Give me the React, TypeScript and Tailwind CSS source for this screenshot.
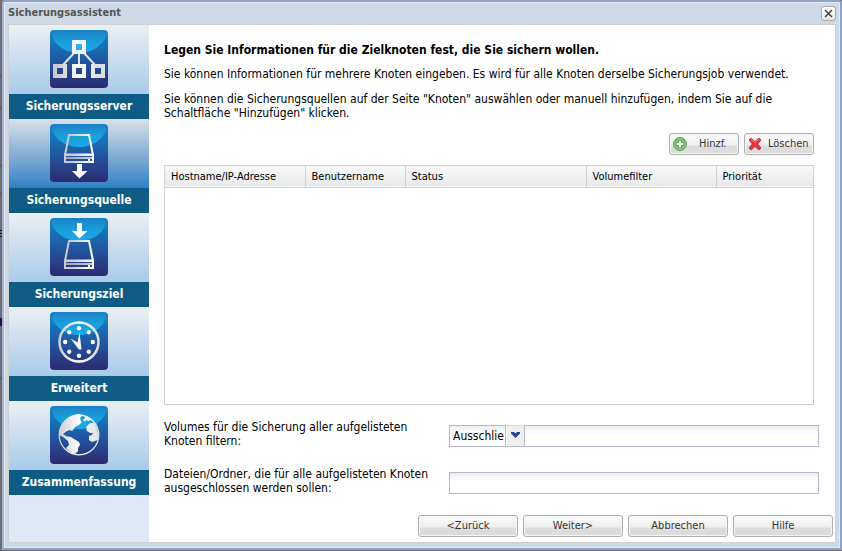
import { useId, type ReactNode } from "react";
import { clsx } from "clsx";

interface Step {
  label: string;
  glyph: (fill: string) => ReactNode;
  active?: boolean;
}

const drive = (fill: string) => (
  <>
    <path d="M5 1h20l4 20H1z" fill="none" stroke={fill} strokeWidth="2" />
    <path d="M1 20.500h28v7.500H1z" fill="none" stroke={fill} strokeWidth="2" />
    <path d="M1 24h28" stroke={fill} strokeWidth="1.500" />
    <rect x="24" y="25" width="2" height="2" fill={fill} />
  </>
);

const STEPS: Step[] = [
  {
    label: "Sicherungsserver",
    glyph: (fill) => (
      <>
        <path d="M25 22 12 36M29 22v14M33 22l13 14" stroke="#dfe4ee" strokeWidth="2" />
        <g fill="none" stroke={fill} strokeWidth="4">
          <rect x="24" y="12" width="10" height="10" />
          <rect x="5" y="36" width="10" height="10" />
          <rect x="24" y="36" width="10" height="10" />
          <rect x="43" y="36" width="10" height="10" />
        </g>
        <rect x="26" y="14" width="6" height="6" fill="#27b0f5" />
      </>
    ),
  },
  {
    label: "Sicherungsquelle",
    active: true,
    glyph: (fill) => (
      <>
        <g transform="translate(14 10)">{drive(fill)}</g>
        <path d="M27 40h5v7h5.500L29.500 54.500 22 47h5z" fill="#fff" />
      </>
    ),
  },
  {
    label: "Sicherungsziel",
    glyph: (fill) => (
      <>
        <path d="M27 5h5v8h5.500L29.500 20.500 22 13h5z" fill="#fff" />
        <g transform="translate(14 22)">{drive(fill)}</g>
      </>
    ),
  },
  {
    label: "Erweitert",
    glyph: (fill) => (
      <>
        <circle cx="29" cy="30" r="19.500" fill="none" stroke={fill} strokeWidth="2.500" />
        {[0, 45, 90, 135, 180, 225, 270, 315].map((angle) => (
          <circle key={angle} cx="29" cy="16.200" r="2.200" fill={fill} transform={`rotate(${angle} 29 30)`} />
        ))}
        <path d="M29.500 20.500l2 17h-2.500L20.500 26.500l7 4z" fill={fill} />
      </>
    ),
  },
  {
    label: "Zusammenfassung",
    glyph: (fill) => (
      <>
        <circle cx="29" cy="29" r="19.800" fill="none" stroke={fill} strokeWidth="1.300" />
        <path
          d="M9 29c0-7 4-14 9-17 4-3 8-4 12-4l2 2-2 2 1 3 1 1-3 3-4 2-2 3-1 1-2-1-3 1-4 3 3 2 5 1 3 2 5 3 1 3-2 3v3l-3 3c-4-1-8-4-9-6l3-3-1-4-5-4z"
          fill={fill}
        />
        <path d="M34 10c3 0 5 2 7 4l-2 1-3-1-1 2-2-2 2-2zM41 17l3 0c4 5 5 12 4 17l-3 1-3 1-3-2 0-4 3-1 1-2-3 0-3-2-1-4 3-3z" fill={fill} />
      </>
    ),
  },
];

const COLUMNS = [
  { label: "Hostname/IP-Adresse", width: "w-[140px]" },
  { label: "Benutzername", width: "w-[100px]" },
  { label: "Status", width: "w-[181px]" },
  { label: "Volumefilter", width: "w-[130px]" },
  { label: "Priorität", width: "" },
];

function StepIcon({ glyph }: { glyph: Step["glyph"] }) {
  const id = useId();
  return (
    <svg width="58" height="58" viewBox="0 0 58 58" aria-hidden="true">
      <defs>
        <linearGradient id={`${id}base`} x1="0" y1="0" x2="0" y2="1">
          <stop offset="0" stopColor="#1b84c8" />
          <stop offset=".25" stopColor="#1672b8" />
          <stop offset=".6" stopColor="#23509a" />
          <stop offset="1" stopColor="#2d2a70" />
        </linearGradient>
        <linearGradient id={`${id}glow`} x1="0" y1="0" x2="0" y2="1">
          <stop offset="0" stopColor="#1d86cb" />
          <stop offset=".5" stopColor="#18a0da" />
          <stop offset="1" stopColor="#1fa6e6" />
        </linearGradient>
        <linearGradient id={`${id}metal`} gradientUnits="userSpaceOnUse" x1="8" y1="0" x2="50" y2="0">
          <stop offset="0" stopColor="#c9cbd2" />
          <stop offset=".5" stopColor="#fff" />
          <stop offset="1" stopColor="#dcdde3" />
        </linearGradient>
      </defs>
      <rect width="58" height="58" rx="4" fill={`url(#${id}base)`} />
      <path d="M2 5q0-3 3-3h48q3 0 3 3C54 15 42 23 29 23S4 15 2 5z" fill={`url(#${id}glow)`} />
      {glyph(`url(#${id}metal)`)}
    </svg>
  );
}

function AddIcon() {
  return (
    <svg width="14" height="14" viewBox="0 0 14 14" aria-hidden="true">
      <circle cx="7" cy="7" r="6.400" fill="#6eb662" stroke="#4f9a48" />
      <circle cx="7" cy="7" r="5.200" fill="none" stroke="#a5d59c" strokeWidth=".8" />
      <path d="M7 4v6M4 7h6" stroke="#fff" strokeWidth="2.200" />
    </svg>
  );
}

function DeleteIcon() {
  return (
    <svg width="14" height="14" viewBox="0 0 14 14" aria-hidden="true">
      <path
        d="M3 1l4 3.500L11 1l2 2-3.300 4L13 11l-2 2-4-3.500L3 13l-2-2 3.300-4L1 3z"
        fill="#e2353c"
        stroke="#c3262d"
        strokeWidth=".8"
        strokeLinejoin="round"
      />
      <path d="M3 2l4 3.500L11 2" fill="none" stroke="#f08a86" />
    </svg>
  );
}

function Button({ children, className }: { children: ReactNode; className?: string }) {
  return (
    <button
      type="button"
      className={clsx(
        "flex h-[22px] items-center rounded-[3px] border border-[#b0b0b0] bg-linear-to-b from-[#fbfbfb] from-0% via-[#efefef] via-55% to-[#dcdcdc] to-60% text-[11px] text-[#333] shadow-[inset_0_0_0_1px_#f4f4f4]",
        className,
      )}
    >
      {children}
    </button>
  );
}

const FIELD =
  "h-[22px] border border-[#b5b8c8] bg-linear-to-b from-[#eceeee] to-white to-40% text-xs leading-[14px] text-black outline-none";

export default function App() {
  return (
    <div className="flex min-h-screen bg-[#6d6c70] pb-px font-['DejaVu_Sans_Condensed','DejaVu_Sans',sans-serif] text-xs leading-[14px] text-black [font-stretch:condensed]">
      <svg className="w-[2px] shrink-0" aria-hidden="true">
        <path d="M0 75.500h2M0 107.500h2M0 165.500h2M0 193.500h2M0 378.500h2" stroke="#504f56" />
        <path d="M0 230.500h2M0 233.500h2M0 236.500h2" stroke="#111" />
        <path d="M1 318v8" stroke="#301040" strokeWidth="2" />
      </svg>
      <section className="flex min-w-0 flex-1 flex-col rounded-t-[3px] border-2 border-[#8fa3c9] border-l-[#a4b6d8] bg-[#ced9e7] px-1 pb-[5px] shadow-[inset_0_0_0_1px_#dfe8f4]">
        <header className="flex h-[22px] items-center justify-between">
          <h1 className="text-[11px] font-bold text-[#555]">Sicherungsassistent</h1>
          <button
            type="button"
            aria-label="Schließen"
            className="flex size-[15px] items-center justify-center rounded-[3px] border border-[#a9a9a9] bg-linear-to-b from-white to-[#e6e6e6]"
          >
            <svg width="9" height="9" viewBox="0 0 9 9" aria-hidden="true">
              <path d="M1 1l7 7M8 1L1 8" stroke="#444" strokeWidth="1.500" />
            </svg>
          </button>
        </header>

        <div className="flex flex-1 border border-[#d0d0d0] bg-white">
          <nav className="w-[140px] shrink-0 bg-[#dfe8f6]">
            <ol>
              {STEPS.map((step) => (
                <li key={step.label}>
                  <div
                    className={clsx(
                      "flex h-[69px] justify-center bg-linear-to-b pt-[5px]",
                      step.active ? "from-[#d9e0e7] to-[#2e80c4]" : "from-[#ebeff3] to-[#a8cbe9]",
                    )}
                  >
                    <StepIcon glyph={step.glyph} />
                  </div>
                  <div className="h-[25px] bg-[#0e5c86] text-center leading-[25px] font-bold text-white">
                    {step.label}
                  </div>
                </li>
              ))}
            </ol>
          </nav>

          <main className="flex min-w-0 flex-1 flex-col pt-[18px] pr-[2px] pb-[5px] pl-[15px]">
            <h2 className="font-bold">Legen Sie Informationen für die Zielknoten fest, die Sie sichern wollen.</h2>
            <p className="mt-[10px]">
              Sie können Informationen für mehrere Knoten eingeben. Es wird für alle Knoten derselbe Sicherungsjob
              verwendet.
            </p>
            <p className="mt-[11px] max-w-[620px]">
              Sie können die Sicherungsquellen auf der Seite "Knoten" auswählen oder manuell hinzufügen, indem Sie auf
              die Schaltfläche "Hinzufügen" klicken.
            </p>

            <div className="mt-[13px] mr-[19px] flex justify-end gap-[5px]">
              <Button className="w-[70px] gap-3 pl-[3px]">
                <AddIcon />
                Hinzf.
              </Button>
              <Button className="w-[70px] gap-[6px] pl-[3px]">
                <DeleteIcon />
                Löschen
              </Button>
            </div>

            <div className="mt-[10px] mr-[19px] min-h-[240px] flex-1 border border-[#d0d0d0]">
              <table className="w-full table-fixed border-collapse">
                <thead>
                  <tr className="h-[21px] border-b border-[#d0d0d0] bg-linear-to-b from-[#f9f9f9] to-[#e7e9eb]">
                    {COLUMNS.map((column) => (
                      <th
                        key={column.label}
                        className={clsx(
                          "border-r border-[#d0d0d0] p-0 pt-px pl-[6px] text-left text-[11px] font-normal last:border-r-0",
                          column.width,
                        )}
                      >
                        {column.label}
                      </th>
                    ))}
                  </tr>
                </thead>
              </table>
            </div>

            <div className="mt-[15px] mr-[14px] flex">
              <label htmlFor="volumes" className="w-[285px] shrink-0 pr-5">
                Volumes für die Sicherung aller aufgelisteten Knoten filtern:
              </label>
              <div className="relative mt-[5px] w-[75px] shrink-0">
                <select aria-label="Filtertyp" className={clsx(FIELD, "w-[57px] appearance-none pl-[3px]")}>
                  <option>Ausschlie</option>
                </select>
                <span className="pointer-events-none absolute top-0 right-0 flex h-[22px] w-[17px] justify-center border-y border-t-[#d5d8e2] border-b-[#b5b8c8] bg-[#eee] pt-[6px]">
                  <svg width="9" height="6" viewBox="0 0 9 6" aria-hidden="true">
                    <path d="M0 0h3l1.500 1.500L6 0h3v1.500L4.500 6 0 1.500z" fill="#27478f" />
                  </svg>
                </span>
              </div>
              <input id="volumes" type="text" className={clsx(FIELD, "mt-[5px] min-w-0 flex-1 px-1")} />
            </div>

            <div className="mt-[19px] mr-[14px] flex">
              <label htmlFor="excluded" className="w-[285px] shrink-0 pr-5">
                Dateien/Ordner, die für alle aufgelisteten Knoten ausgeschlossen werden sollen:
              </label>
              <input id="excluded" type="text" className={clsx(FIELD, "mt-[5px] min-w-0 flex-1 px-1")} />
            </div>

            <footer className="mt-5 flex justify-end gap-[5px]">
              {["<Zurück", "Weiter>", "Abbrechen", "Hilfe"].map((label) => (
                <Button key={label} className="w-[100px] justify-center">
                  {label}
                </Button>
              ))}
            </footer>
          </main>
        </div>
      </section>
    </div>
  );
}
